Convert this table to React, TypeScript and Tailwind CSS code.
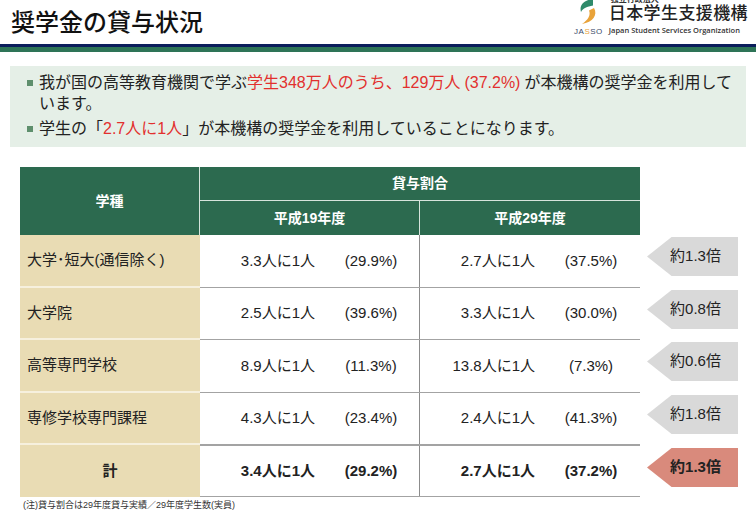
const font = "font-['Liberation_Sans','Noto_Sans_CJK_JP',sans-serif]";

const rows = [
  { name: "大学･短大(通信除く)", a: "3.3人に1人", ap: "(29.9%)", b: "2.7人に1人", bp: "(37.5%)", ratio: "約1.3倍", h: "h-[53px]" },
  { name: "大学院", a: "2.5人に1人", ap: "(39.6%)", b: "3.3人に1人", bp: "(30.0%)", ratio: "約0.8倍", h: "h-[52px]" },
  { name: "高等専門学校", a: "8.9人に1人", ap: "(11.3%)", b: "13.8人に1人", bp: "(7.3%)", ratio: "約0.6倍", h: "h-[53px]" },
  { name: "専修学校専門課程", a: "4.3人に1人", ap: "(23.4%)", b: "2.4人に1人", bp: "(41.3%)", ratio: "約1.8倍", h: "h-[52px]" },
];

function Logo() {
  return (
    <div className="flex items-start gap-[6px] -mt-[5px] pr-[8px]">
      <div className="flex flex-col items-center pt-[4px]">
        <svg width="22" height="27" viewBox="0 0 22 27">
          <path d="M16 0 C7 1 2 6 4 13 C6 9 10 7.5 16 6.5 Z" fill="#2f8a6a" />
          <path d="M17 9 C21 16 16 23 5 25 C11 21 14 16 12 11.5 Z" fill="#e9a33a" />
        </svg>
        <div className="text-[8px] leading-[9px] tracking-[0.5px] text-[#3a4a6a] mt-[1px]">
          JA<span className="text-[#e9a33a]">S</span>SO
        </div>
      </div>
      <div className="flex flex-col">
        <div className="text-[8px] leading-[9px] text-[#333] font-bold pl-[2px]">独立行政法人</div>
        <div className="text-[17px] leading-[20px] text-[#222] tracking-[0.4px] font-medium">日本学生支援機構</div>
        <div className="text-[7.5px] leading-[8px] text-[#333] mt-[2px] font-['Open_Sans',sans-serif] font-semibold whitespace-nowrap">
          Japan Student Services Organization
        </div>
      </div>
    </div>
  );
}

function Arrow({ text, total }: { text: string; total?: boolean }) {
  return (
    <div
      className={
        "w-[91px] h-[39px] flex items-center justify-center pl-[6px] text-[15px] text-[#222] [clip-path:polygon(27%_0,100%_0,100%_100%,27%_100%,0_50%)] " +
        (total ? "bg-[#d98a7c] font-bold" : "bg-[#d9d9d9]")
      }
    >
      {text}
    </div>
  );
}

function DataCell({ main, pct, bold, left }: { main: string; pct: string; bold?: boolean; left?: boolean }) {
  return (
    <div
      className={
        "w-[220px] flex items-center " +
        (left ? "border-r border-[#8c8c8c] " : "") +
        (bold ? "font-bold" : "")
      }
    >
      <span className="w-[115px] text-right whitespace-nowrap">{main}</span>
      <span className="w-[62px] ml-[25px] text-center whitespace-nowrap">{pct}</span>
    </div>
  );
}

export default function App() {
  return (
    <div className={"w-[756px] h-[531px] bg-white overflow-hidden text-[#222] " + font}>
      <div className="h-[44px] flex justify-between">
        <div className="pl-[11px] pt-[8px] text-[24px] leading-[30px] font-medium text-[#111]">
          奨学金の貸与状況
        </div>
        <Logo />
      </div>
      <div className="h-[3px] bg-[#0b1d5c]" />
      <div className="h-[5px] bg-[#2e7457]" />

      <div className="mx-[10px] mt-[14px] h-[81px] bg-[#e5efe7] pl-[17px] pt-[6px] text-[16px] leading-[21px] text-[#222]">
        <div className="flex items-start">
          <div className="w-[6px] h-[6px] bg-[#5e8f6d] mt-[8px] shrink-0" />
          <p className="ml-[6px] w-[700px]">
            我が国の高等教育機関で学ぶ<span className="text-[#e2302e]">学生348万人のうち、129万人<span className="px-[4px]">(37.2%)</span></span>が本機構の奨学金を利用しています。
          </p>
        </div>
        <div className="flex items-start mt-[4px]">
          <div className="w-[6px] h-[6px] bg-[#5e8f6d] mt-[8px] shrink-0" />
          <p className="ml-[6px]">
            学生の「<span className="text-[#e2302e]">2.7人に1人</span>」が本機構の奨学金を利用していることになります。
          </p>
        </div>
      </div>

      <div className="ml-[20px] mt-[20px] text-[15px]">
        <div className="grid w-[620px] grid-cols-[180px_220px_220px] grid-rows-[34px_34px] bg-[#2c6a4f] text-white font-bold text-[14px]">
          <div className="row-span-2 flex items-center justify-center border-r border-[#d6e4dc]">学種</div>
          <div className="col-span-2 flex items-center justify-center border-b border-[#d6e4dc]">貸与割合</div>
          <div className="flex items-center justify-center border-r border-[#d6e4dc]">平成19年度</div>
          <div className="flex items-center justify-center">平成29年度</div>
        </div>

        {rows.map((r) => (
          <div key={r.name} className={"flex " + r.h}>
            <div className="w-[180px] bg-[#e9dcb4] border-b-2 border-[#f6f0de] flex items-center pl-[7px] whitespace-nowrap">
              {r.name}
            </div>
            <div className="flex border-b border-[#a3a3a3]">
              <DataCell main={r.a} pct={r.ap} left />
              <DataCell main={r.b} pct={r.bp} />
            </div>
            <div className="ml-[7px] pt-[2px]">
              <Arrow text={r.ratio} />
            </div>
          </div>
        ))}

        <div className="flex h-[52px]">
          <div className="w-[180px] bg-[#e9dcb4] flex items-center justify-center font-bold">計</div>
          <div className="flex border-t border-b border-[#a3a3a3]">
            <DataCell main="3.4人に1人" pct="(29.2%)" bold left />
            <DataCell main="2.7人に1人" pct="(37.2%)" bold />
          </div>
          <div className="ml-[7px] pt-[3px]">
            <Arrow text="約1.3倍" total />
          </div>
        </div>

        <div className="mt-[2px] ml-[3px] text-[9px] leading-[12px] text-[#333]">
          (注)貸与割合は29年度貸与実績／29年度学生数(実員)
        </div>
      </div>
    </div>
  );
}
